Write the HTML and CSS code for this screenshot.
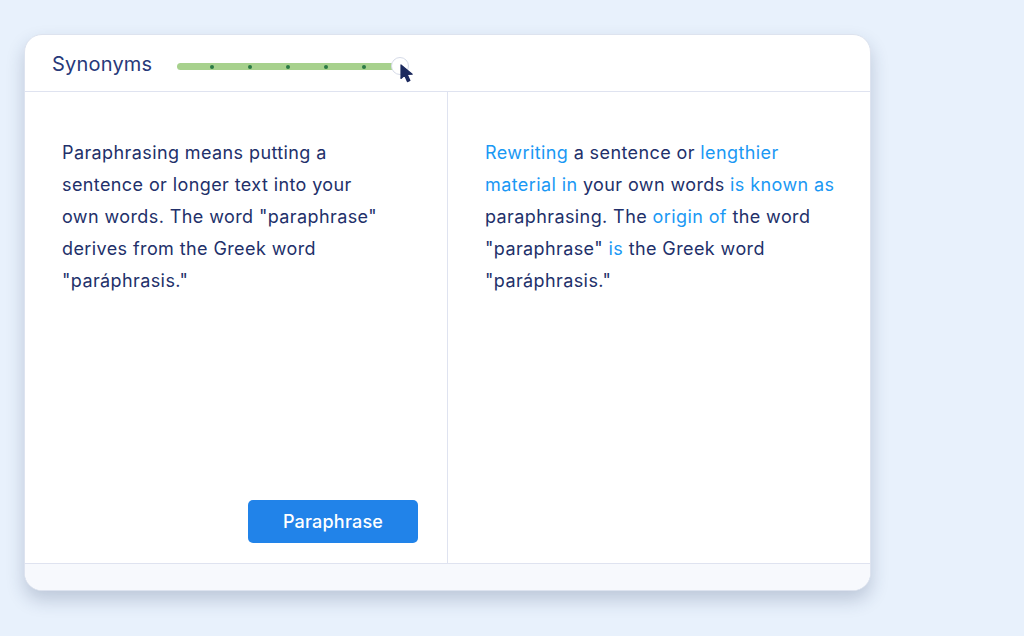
FILE: index.html
```html
<!DOCTYPE html>
<html lang="en">
<head>
    <meta charset="UTF-8">
    <meta name="viewport" content="width=device-width, initial-scale=1.0">
    <title>Paraphraser</title>
    <link rel="stylesheet" href="styles.css">
</head>
<body>
    <div class="card">
        <div class="card-header">
            <span class="mode-label">Synonyms</span>
            <div class="slider">
                <span class="dot"></span>
                <span class="dot"></span>
                <span class="dot"></span>
                <span class="dot"></span>
                <span class="dot"></span>
                <span class="thumb"></span>
                <svg class="cursor" width="14" height="19" viewBox="0 0 14 19">
                    <path d="M1 1 L1 14.5 L4.6 11.3 L7.4 17.6 L9.9 16.5 L7.2 10.4 L12.2 10.2 Z" fill="#1c2a5e" stroke="#1c2a5e" stroke-width="1.2" stroke-linejoin="round"/>
                </svg>
            </div>
        </div>

        <div class="panes">
            <div class="pane pane-input">
                <p class="text">Paraphrasing means putting a sentence or longer text into your own words. The word "paraphrase" derives from the Greek word "paráphrasis."</p>
                <button class="btn-paraphrase">Paraphrase</button>
            </div>
            <div class="pane pane-output">
                <p class="text"><span class="changed">Rewriting</span> a sentence or <span class="changed">lengthier material in</span> your own words <span class="changed">is known as</span> paraphrasing. The <span class="changed">origin of</span> the word "paraphrase" <span class="changed">is</span> the Greek word "paráphrasis."</p>
            </div>
        </div>

        <div class="card-footer"></div>
    </div>
</body>
</html>
```

FILE: styles.css
```css
body {
    margin: 0;
    padding: 34px 0 0 24px;
    height: 636px;
    box-sizing: border-box;
    background-color: #e8f1fc;
    font-family: Inter, "Noto Sans", sans-serif;
    color: #22306a;
}

.card {
    width: 847px;
    height: 557px;
    box-sizing: border-box;
    display: flex;
    flex-direction: column;
    background: #ffffff;
    border: 1px solid #dde3ef;
    border-radius: 18px;
    box-shadow: 0 9px 18px rgba(38, 56, 96, 0.22);
    overflow: hidden;
}

.card-header {
    height: 57px;
    box-sizing: border-box;
    display: flex;
    align-items: center;
    padding: 4px 0 0 27px;
    border-bottom: 1px solid #dfe3f0;
}

.mode-label {
    font-size: 20px;
    letter-spacing: 0.2px;
    color: #27397a;
    margin-right: 25px;
    margin-top: -2px;
}

.slider {
    position: relative;
    width: 223px;
    height: 7px;
    margin-top: 3px;
    display: flex;
    align-items: center;
    gap: 34px;
    padding-left: 33px;
    box-sizing: border-box;
    background: #a7d18d;
    border-radius: 4px;
}

.dot {
    width: 4px;
    height: 4px;
    border-radius: 50%;
    background: #2b7a45;
}

.thumb {
    position: absolute;
    right: -9px;
    top: -6px;
    width: 18px;
    height: 18px;
    box-sizing: border-box;
    border-radius: 50%;
    background: #ffffff;
    border: 1px solid #d6dbe8;
}

.cursor {
    position: absolute;
    left: 223px;
    top: 1px;
}

.panes {
    flex: 1;
    display: grid;
    grid-template-columns: 423px 1fr;
}

.pane {
    display: flex;
    flex-direction: column;
    padding: 45px 0 0 37px;
}

.pane-input {
    border-right: 1px solid #dfe3f0;
    padding-right: 29px;
    padding-bottom: 20px;
    justify-content: space-between;
}

.text {
    margin: 0;
    width: 352px;
    font-size: 18px;
    line-height: 32px;
    letter-spacing: 0.4px;
    color: #22306a;
}

.pane-input .text {
    width: 324px;
}

.changed {
    color: #1a98f4;
}

.btn-paraphrase {
    align-self: flex-end;
    width: 170px;
    height: 43px;
    border: none;
    border-radius: 5px;
    background: #2183e9;
    color: #ffffff;
    font-family: Inter, "Noto Sans", sans-serif;
    font-size: 18px;
    font-weight: 500;
    letter-spacing: 0.2px;
    cursor: pointer;
}

.card-footer {
    height: 27px;
    box-sizing: border-box;
    background: #f7f9fd;
    border-top: 1px solid #dfe3f0;
}
```
